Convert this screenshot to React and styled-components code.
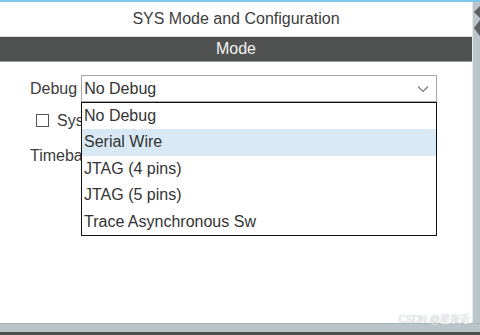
import React from 'react';
import styled, { createGlobalStyle } from 'styled-components';

const GlobalStyle = createGlobalStyle`
  html, body {
    margin: 0;
    padding: 0;
    background: #ffffff;
  }
  body {
    font-family: "Liberation Sans", Arial, sans-serif;
  }
`;

const Screen = styled.div`
  width: 480px;
  height: 335px;
  display: flex;
  flex-direction: column;
  overflow: hidden;
  position: relative;
  border-top: 2px solid #7ec8ec;
  box-sizing: border-box;
`;

const Main = styled.div`
  flex: 1;
  display: flex;
  flex-direction: row;
  min-height: 0;
`;

const Panel = styled.div`
  flex: 1;
  display: flex;
  flex-direction: column;
  background: #ffffff;
`;

const SideStrip = styled.div`
  width: 7px;
  background: #b9c5cb;
  border-left: 1px solid #e4e9eb;
  display: flex;
  flex-direction: column;
  align-items: flex-end;
  padding-top: 4px;
`;

const Title = styled.div`
  height: 34px;
  line-height: 34px;
  text-align: center;
  font-size: 16px;
  color: #3d3d3d;
  border-bottom: 1px solid #d9d9d9;
`;

const ModeBar = styled.div`
  height: 24px;
  line-height: 24px;
  background: #505251;
  color: #f2f2f2;
  text-align: center;
  font-size: 16px;
  border-bottom: 1px solid #9a9a9a;
`;

const Content = styled.div`
  position: relative;
  padding: 13px 0 0 30px;
  display: flex;
  flex-direction: column;
`;

const Row = styled.div`
  display: flex;
  align-items: center;
  height: ${p => p.h}px;
  font-size: 16px;
  color: #3c3c3c;
  white-space: nowrap;
  ${p => p.clip && `
    width: 51px;
    overflow: hidden;
  `}
`;

const Label = styled.span`
  margin-right: 4px;
`;

const Select = styled.div`
  width: 356px;
  height: 27px;
  box-sizing: border-box;
  border: 1px solid #a6a6a6;
  padding: 0 7px 0 2px;
  display: flex;
  align-items: center;
  justify-content: space-between;
  color: #333;
`;

const Check = styled.span`
  flex: none;
  width: 13px;
  height: 13px;
  box-sizing: border-box;
  border: 1px solid #555;
  margin: 0 8px 0 6px;
  background: #fff;
`;

const List = styled.div`
  position: absolute;
  left: 81px;
  top: 40px;
  width: 356px;
  box-sizing: border-box;
  border: 1px solid #111;
  background: #fff;
  display: flex;
  flex-direction: column;
`;

const Item = styled.div`
  height: 26.4px;
  line-height: 26.4px;
  padding-left: 2px;
  font-size: 16px;
  color: #333;
  background: ${p => (p.active ? '#d9e8f5' : '#fff')};
  white-space: nowrap;
`;

const Footer = styled.div`
  height: 12px;
  background: #b9c5cb;
  border-top: 1px solid #a9b4b9;
  border-bottom: 3px solid #4b4f50;
  box-sizing: border-box;
`;

const Watermark = styled.div`
  position: absolute;
  right: 10px;
  bottom: 9px;
  font-size: 10px;
  color: #f4f6f7;
  text-shadow: 0 0 1px #9aa3a8;
  font-family: "Liberation Sans", "Noto Sans CJK SC", sans-serif;
`;

const Chevron = () => (
  <svg width="12" height="8" viewBox="0 0 12 8">
    <path d="M1 1.5 L6 6.5 L11 1.5" fill="none" stroke="#7a7a7a" strokeWidth="1.2" />
  </svg>
);

const Collapse = () => (
  <svg width="7" height="32" viewBox="0 0 7 32">
    <path d="M7 0 L1 6 L7 12 Z" fill="#5b5f61" />
    <path d="M7 14 L1 22 L7 30 Z" fill="#5b5f61" />
  </svg>
);

const options = ['No Debug', 'Serial Wire', 'JTAG (4 pins)', 'JTAG (5 pins)', 'Trace Asynchronous Sw'];

export default function App() {
  return (
    <>
      <GlobalStyle />
      <Screen>
        <Main>
          <Panel>
            <Title>SYS Mode and Configuration</Title>
            <ModeBar>Mode</ModeBar>
            <Content>
              <Row h={27}>
                <Label>Debug</Label>
                <Select>
                  <span>No Debug</span>
                  <Chevron />
                </Select>
              </Row>
              <Row h={37} clip>
                <Check />
                <span>System Wake-Up</span>
              </Row>
              <Row h={34} clip>
                <span>Timebase Source</span>
              </Row>
              <List>
                {options.map(o => (
                  <Item key={o} active={o === 'Serial Wire'}>{o}</Item>
                ))}
              </List>
            </Content>
          </Panel>
          <SideStrip>
            <Collapse />
          </SideStrip>
        </Main>
        <Footer />
        <Watermark>CSDN @星夜近</Watermark>
      </Screen>
    </>
  );
}
